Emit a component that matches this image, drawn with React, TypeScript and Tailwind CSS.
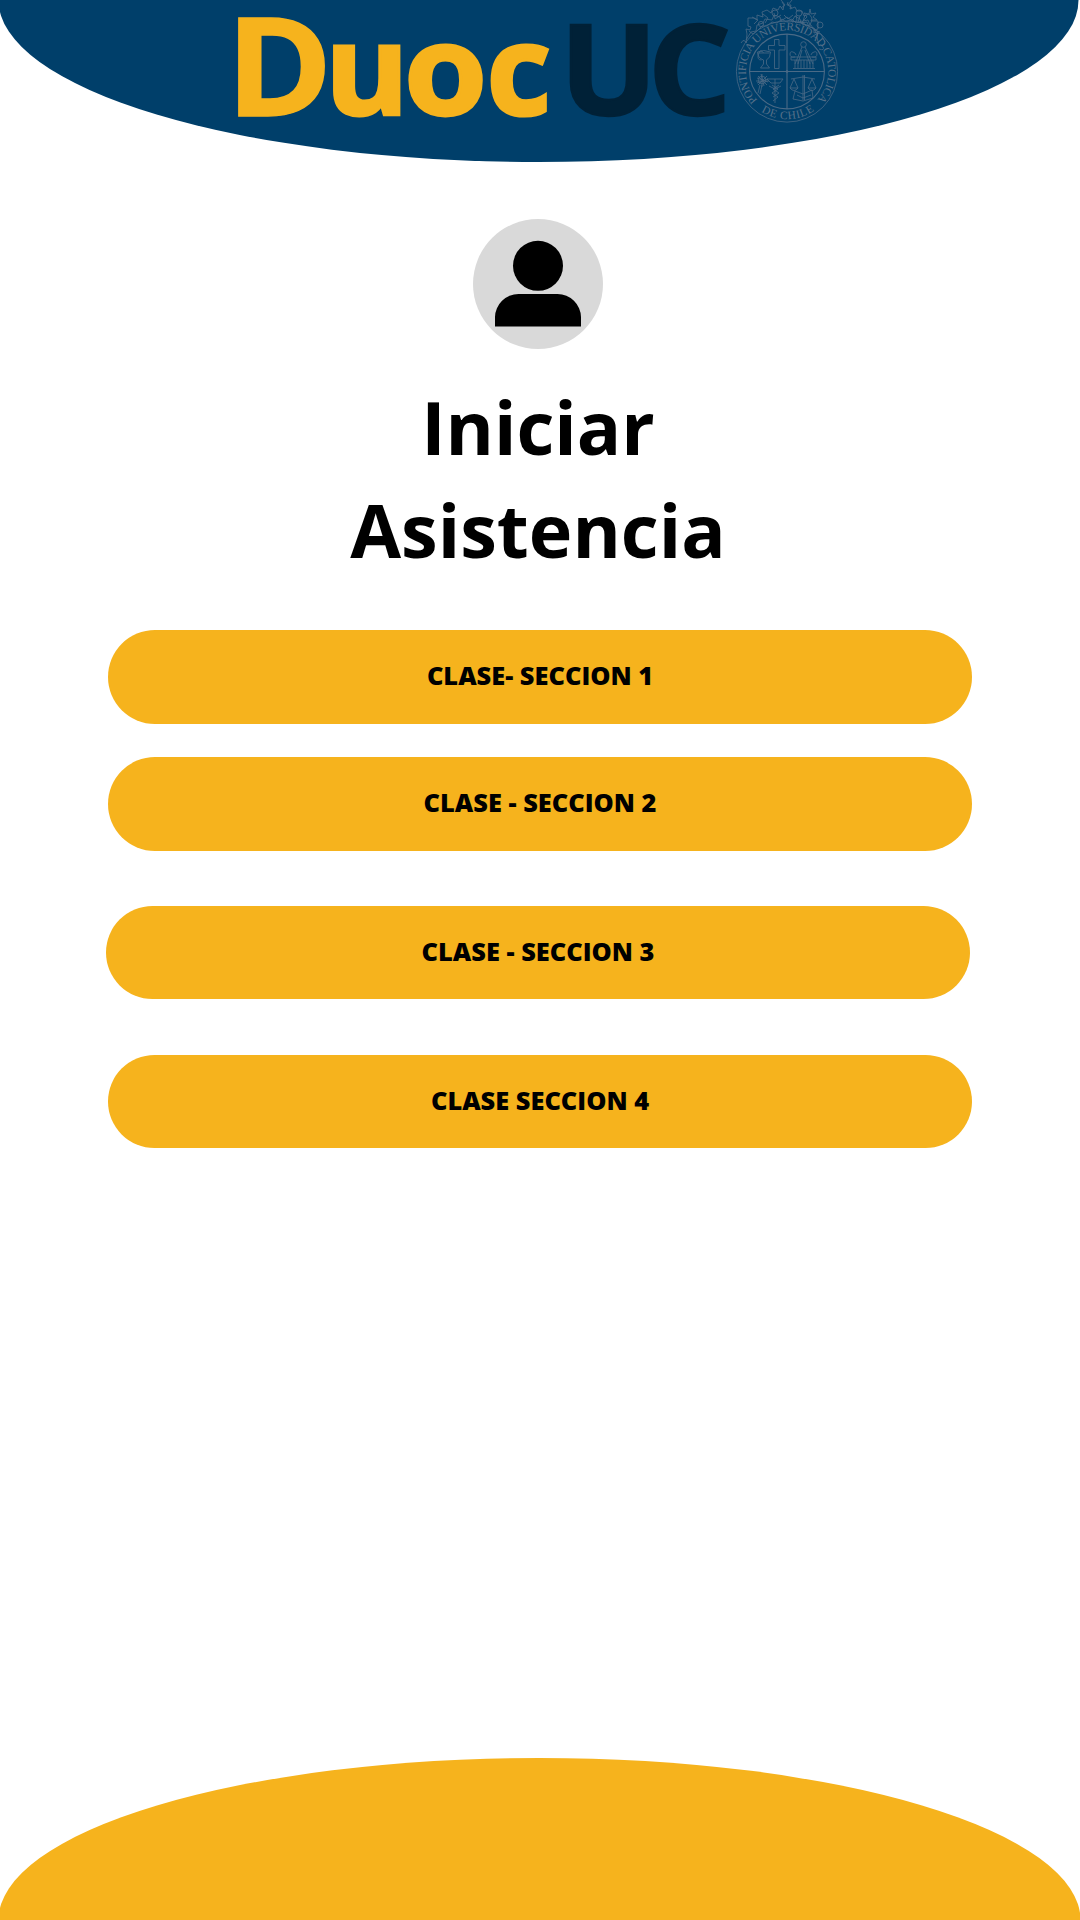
const sections = [
  { label: "CLASE- SECCION 1", spacing: "h-[94px] pb-[4px]" },
  { label: "CLASE - SECCION 2", spacing: "mt-[33px] h-[94px] pb-[4px]" },
  { label: "CLASE - SECCION 3", spacing: "mt-[55px] mr-[4px] h-[93px] pb-[2px]" },
  { label: "CLASE SECCION 4", spacing: "mt-[56px] h-[93px] pb-[2px]" },
];

function Seal() {
  return (
    <g fill="none" stroke="#4a6a86" strokeWidth="0.8">
      <circle cx="787" cy="71.5" r="50.6" />
      <circle cx="787" cy="71.5" r="37.4" strokeWidth="1.1" />
      <path d="M787 34v75M749.6 71.5h74.8" strokeWidth="1.1" />
      <circle cx="787" cy="71.5" r="1" fill="#4a6a86" />
      {/* wreath of leaves and scrolls */}
      <path d="M741 43q2-4 4-2t1 2l1-9-1-5 4 1 1-3-3-1 0-8 6 0 3 2 0-5 6 2-1-5 5-2 4 3 2-5 5 2 2-4 3 4 1-5-2-3m6 0-1 3 4 0-1 4 5-2 2 4 5 0 2 5 5-2 3 4-1 3 7 0 0 8-4 1 0 3 4-1-1 5 2 9q2-3 4 1t-4 2" />
      <path d="M746 40l5-8 5-1 1-6 6-2 2-4 7 1 2-5 6 2 1 4 6-4 5 4 3-5 5 3 1 4 6-1 2 5 5 1 2 5 5 1 4 8M752 17l6 3-4 4m9-10 5 4-3 5m9-10 1 6 6-4m3 0 4 4 5-4m3 0 1 6-5 1m8-6-2 6 6 1m1-8-3 9 7 2M749 31l4 3 5-4 4-4 5 0 5-4 5 1 5-4 4 3 6-3 4 4 6-2 4 5 5-1 3 5 6 2" />
      <path d="m810 9 1 5 5-1-3 4 4 3-5 0-2 5-2-5-5 1 4-4-3-4 5 1zM781 0l4 5-4 3m11-8-4 5 4 3" />
      <circle cx="775" cy="13" r="3" />
      <circle cx="799" cy="13" r="3" />
      <circle cx="761" cy="24" r="2.6" />
      <circle cx="820" cy="25" r="3" />
      {/* chalice and cross */}
      <path d="M774.5 39.5h4.500v6h6v4.500h-6v18.500h-4.500V50h-6v-4.500h6zM757.500 52q6-3 13 0 0 6-4 8v4l3 4h-9l3-4v-4q-6-2-6-8m1 1h11m-6 0q-3-5-5 1t3 6" />
      {/* compass over column */}
      <circle cx="803.5" cy="44.5" r="2.8" />
      <path d="m802 47-7 17m10-17 8 17m-8-14 5 14m-8-14-4 14M791 57h25v3h-25zM793 68.500h22M795 60v8m3-8v8m3-8v8m3-8v8m3-8v8m3-8v8m3-8v8M795 57q-5 1-5-3t5-1l1 2m16 2q5 1 5-3t-5-1l-1 2" />
      {/* sun and staff */}
      <circle cx="762" cy="80" r="3.8" />
      <path d="M762 74v13m-6-6h13m-11-5 9 9m0-9-9 9m3-11 3 12m-7-8 11 4m-11 1 11-4m-8 6-2 8m4-8-2 9M767 79h16l-3 4h-9zM775 79v24m-3-18 6 4-6 4 6 4-5 4m6-16-6 4 6 4-6 4M769 86l6 3 6-3" />
      {/* scales and book */}
      <path d="M803 75v25m1.500-25v25M791 79l12-2 12 2M794 79l-4 9h8zM812 79l-4 9h8zM790 88q4 5 8 0m10 0q4 5 8 0M795 91l8 3 9-4 1 8-10 3-10-2zM797 95l6 3 8-3" />
      <g fill="#557089" stroke="none" fontFamily="'Liberation Serif', serif" fontSize="11.4">
        <path id="sealUpper" fill="none" d="M757.500 100.200A41.2 41.2 0 1 1 815.600 101.200" />
        <path id="sealLower" fill="none" d="M758 109.300A47.6 47.6 0 0 0 816 109.300" />
        <text>
          <textPath href="#sealUpper" textLength="192" lengthAdjust="spacing">PONTIFICIA UNIVERSIDAD CATOLICA</textPath>
        </text>
        <text>
          <textPath href="#sealLower" startOffset="4" textLength="56" lengthAdjust="spacing">DE CHILE</textPath>
        </text>
      </g>
    </g>
  );
}

function Wordmark() {
  return (
    <g fontFamily="'Open Sans', sans-serif" fontWeight="700">
      <g fill="#f6b31d" stroke="#f6b31d">
        <text transform="translate(226 116.2) scale(1.05 1)" fontSize="137" strokeWidth="1.5">D</text>
        <g fontSize="125" strokeWidth="3">
          <text transform="translate(325 114.7) scale(1.02 1)">u</text>
          <text transform="translate(404 114.7) scale(1.075 1)">o</text>
          <text transform="translate(486.5 114.7) scale(1.01 1)">c</text>
        </g>
      </g>
      <g fill="#002137" stroke="#002137" strokeWidth="2.400" fontSize="125">
        <text transform="translate(560 115.3) scale(1.03 1)">U</text>
        <text transform="translate(648 115.3) scale(1.045 1)">C</text>
      </g>
    </g>
  );
}

function Header() {
  return (
    <header className="h-[162px] shrink-0">
      <svg className="block" width="1080" height="162" viewBox="0 0 1080 162">
        <ellipse cx="538.5" cy="0" rx="540" ry="162" fill="#003f6a" />
        <Wordmark />
        <Seal />
      </svg>
    </header>
  );
}

function Avatar() {
  return (
    <svg className="mt-[57px] mr-[4px] shrink-0" width="130" height="130" viewBox="0 0 130 130" role="img" aria-label="Usuario">
      <circle cx="65" cy="65" r="65" fill="#d9d9d9" />
      <circle cx="65" cy="46.8" r="25" />
      <path d="M22 107.5V98A23.5 23.5 0 0 1 45.5 75h39A23.5 23.5 0 0 1 108 98v9.500z" />
    </svg>
  );
}

export default function App() {
  return (
    <div className="flex h-[1920px] w-[1080px] flex-col overflow-hidden bg-white font-['Open_Sans',sans-serif] text-black">
      <Header />
      <main className="flex flex-1 flex-col items-center">
        <Avatar />
        <h1 className="mt-[26px] mr-[4px] text-center text-[73.7px] leading-[103px] font-bold">
          Iniciar
          <br />
          Asistencia
        </h1>
        <nav className="mt-[49px] flex flex-col items-center">
          {sections.map(({ label, spacing }) => (
            <button
              key={label}
              className={`${spacing} flex w-[864px] items-center justify-center rounded-full bg-[#f6b31d] text-[25.4px] font-extrabold`}
            >
              {label}
            </button>
          ))}
        </nav>
      </main>
      <footer className="h-[162px] shrink-0">
        <svg className="block" width="1080" height="162" viewBox="0 0 1080 162">
          <ellipse cx="539.5" cy="162" rx="541" ry="162" fill="#f6b31d" />
        </svg>
      </footer>
    </div>
  );
}
